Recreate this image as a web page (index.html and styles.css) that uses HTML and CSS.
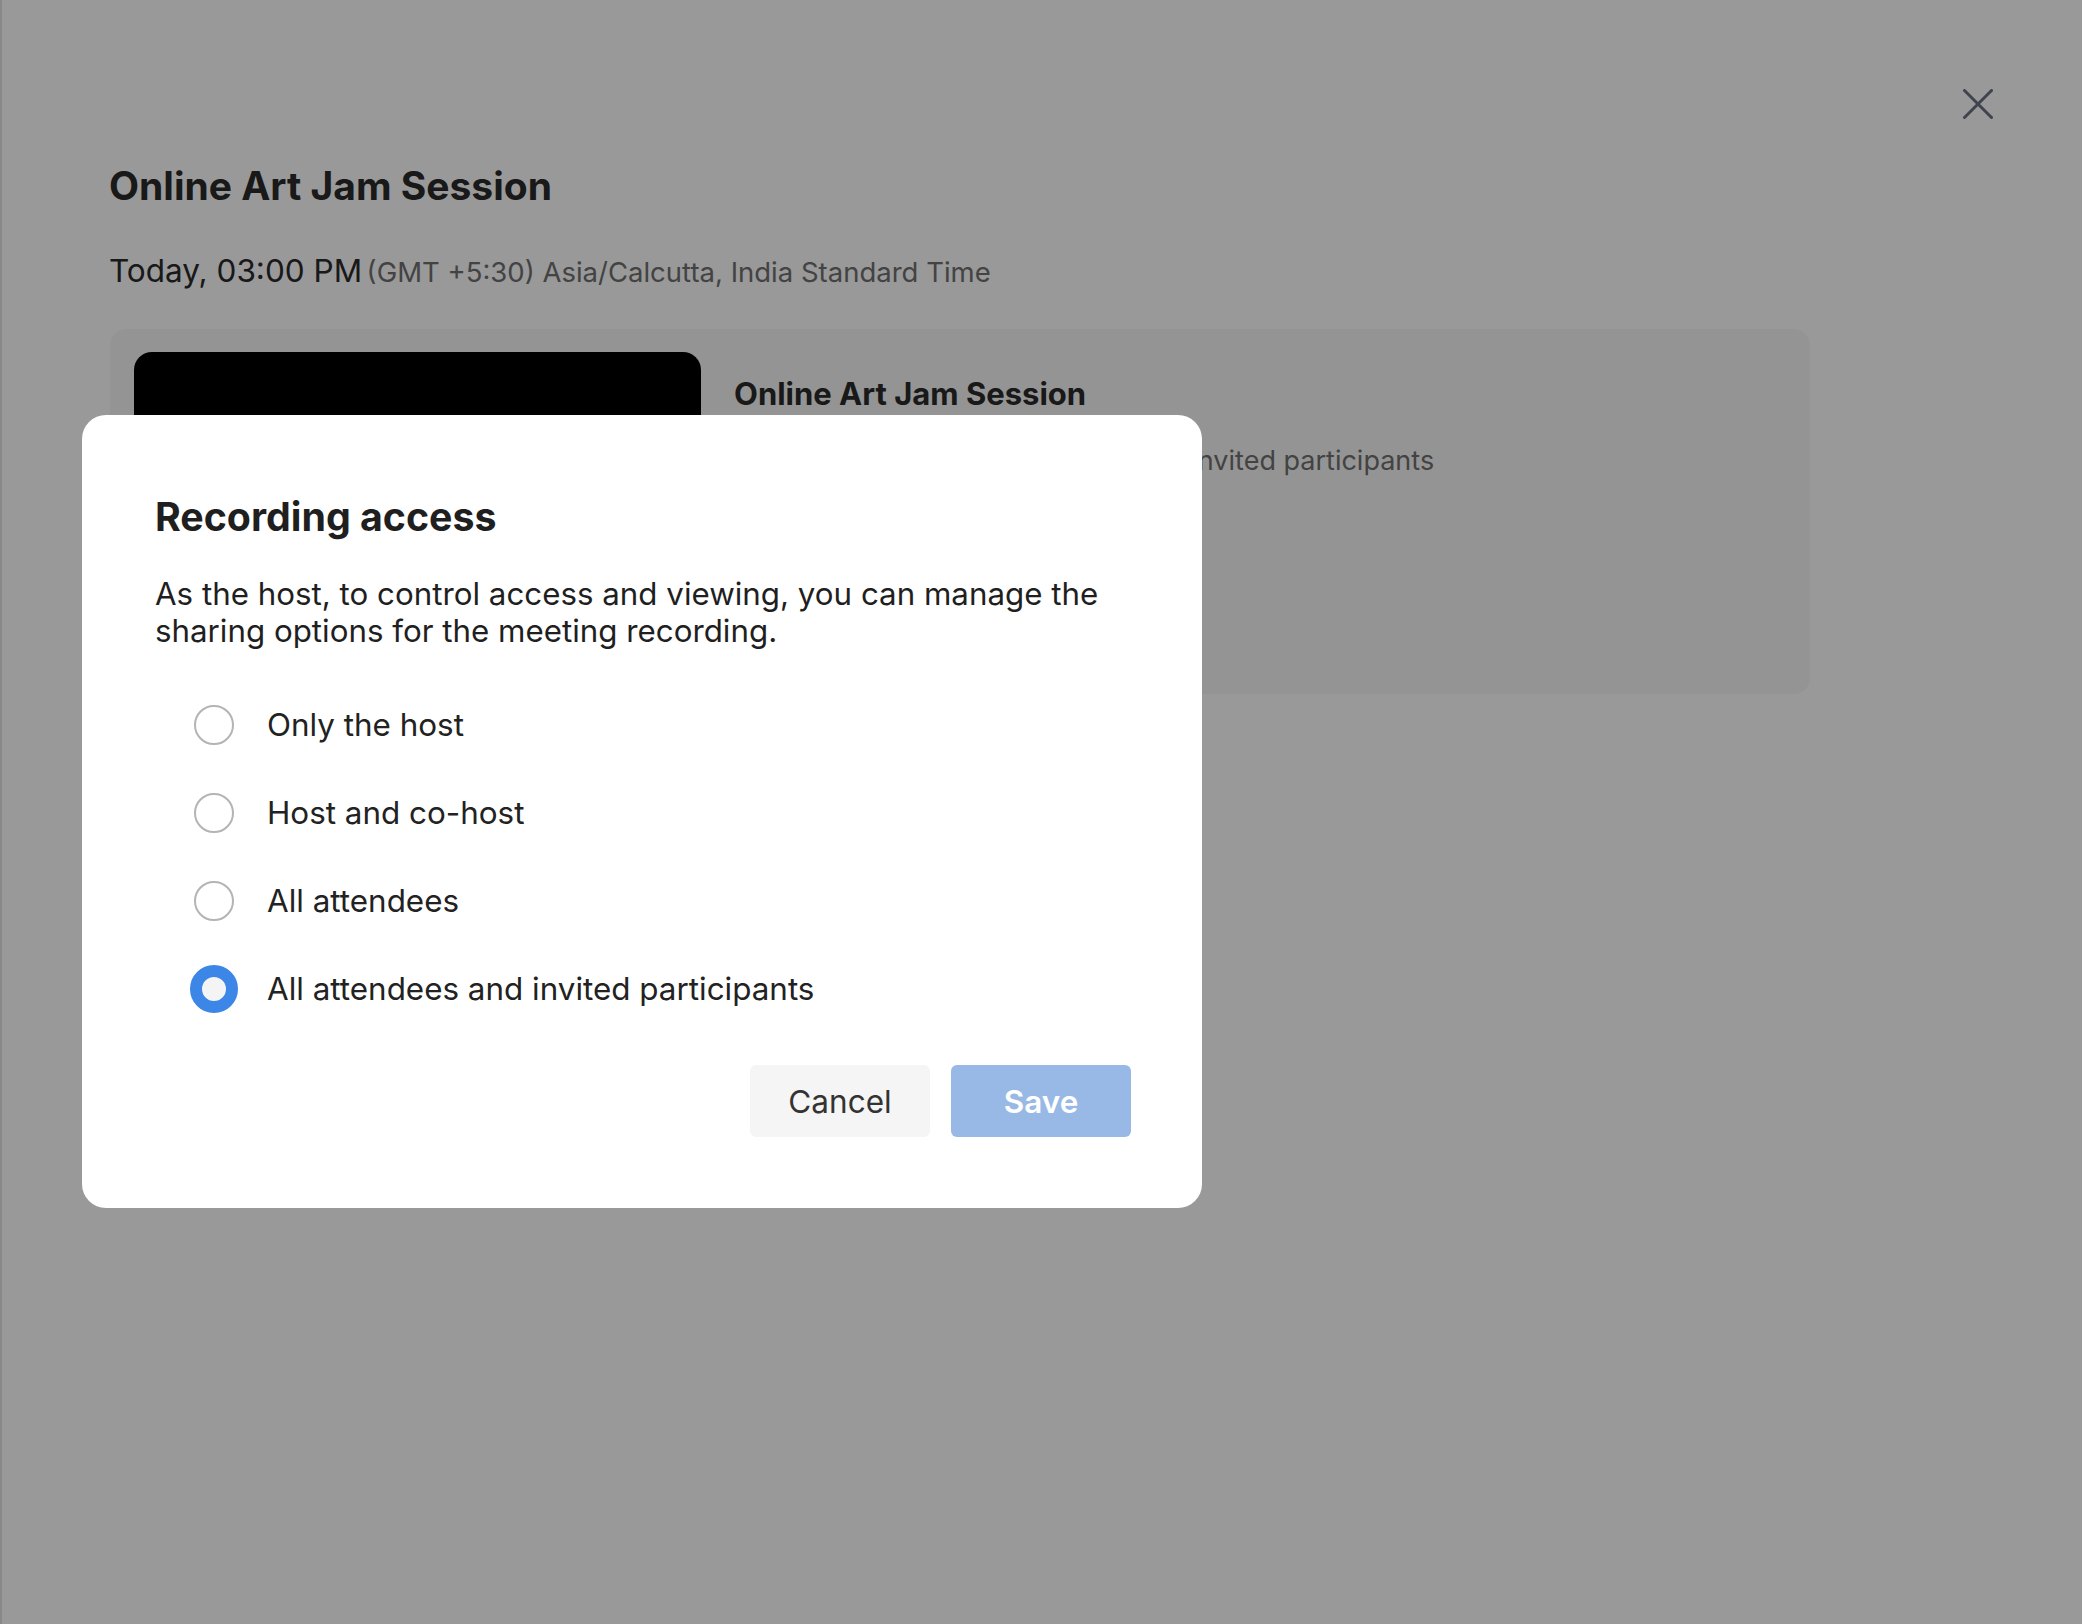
FILE: index.html
```html
<!DOCTYPE html>
<html lang="en">
<head>
<meta charset="utf-8">
<title>Online Art Jam Session</title>
<link rel="stylesheet" href="styles.css">
</head>
<body>
<div class="page">
  <div class="topbar">
    <button class="close" aria-label="Close">
      <svg viewBox="0 0 30 30" width="30" height="30"><path d="M1.5 1.5 L28.5 28.5 M28.5 1.5 L1.5 28.5" stroke="currentColor" stroke-width="3" stroke-linecap="round" fill="none"/></svg>
    </button>
  </div>
  <h1 class="title">Online Art Jam Session</h1>
  <p class="when"><span class="when-time">Today, 03:00 PM</span> <span class="when-zone">(GMT +5:30) Asia/Calcutta, India Standard Time</span></p>
  <div class="card">
    <div class="thumb"></div>
    <div class="card-info">
      <h2 class="card-title">Online Art Jam Session</h2>
      <p class="card-meta">Playback access: All attendees and invited participants</p>
    </div>
  </div>
</div>

<div class="overlay"></div>

<div class="modal" role="dialog" aria-labelledby="dlg-title">
  <h2 class="modal-title" id="dlg-title">Recording access</h2>
  <p class="modal-desc">As the host, to control access and viewing, you can manage the sharing options for the meeting recording.</p>
  <div class="options">
    <label class="option"><span class="radio"></span><span class="option-label">Only the host</span></label>
    <label class="option"><span class="radio"></span><span class="option-label">Host and co-host</span></label>
    <label class="option"><span class="radio"></span><span class="option-label">All attendees</span></label>
    <label class="option"><span class="radio checked"></span><span class="option-label">All attendees and invited participants</span></label>
  </div>
  <div class="actions">
    <button class="btn btn-cancel">Cancel</button>
    <button class="btn btn-save">Save</button>
  </div>
</div>
</body>
</html>
```
FILE: styles.css
```css
* { box-sizing: border-box; }

html, body {
  margin: 0;
  padding: 0;
  background: #ffffff;
  font-family: Inter, Lato, "Noto Sans", "Liberation Sans", sans-serif;
}

.page {
  min-height: 1624px;
  padding: 89px 89px 0 107px;
  border-left: 2px solid #e4e4e4;
}

.topbar {
  display: flex;
  justify-content: flex-end;
  height: 30px;
}

.close {
  width: 30px;
  height: 30px;
  padding: 0;
  border: 0;
  background: none;
  color: #69707d;
  cursor: pointer;
}
.close svg { display: block; }

.title {
  margin: 44px 0 0;
  font-size: 39px;
  line-height: 1.2;
  font-weight: 700;
  color: #2a2a2a;
}

.when {
  margin: 43px 0 0;
  line-height: 36px;
  color: #2a2a2a;
}
.when-time {
  font-size: 31.5px;
}
.when-zone {
  font-size: 27.5px;
  color: #707070;
}

.card {
  margin-top: 35px;
  margin-left: 1px;
  width: 1700px;
  height: 365px;
  padding: 23px 24px;
  background: #f7f7f7;
  border-radius: 16px;
  display: flex;
  gap: 33px;
}

.thumb {
  width: 567px;
  height: 319px;
  background: #000;
  border-radius: 18px;
  flex: none;
}

.card-info {
  padding-top: 22px;
}
.card-title {
  margin: 0;
  font-size: 31px;
  line-height: 40px;
  font-weight: 700;
  color: #2a2a2a;
}
.card-meta {
  margin: 30px 0 0;
  font-size: 27px;
  line-height: 34px;
  color: #707070;
}

.overlay {
  position: fixed;
  inset: 0;
  background: rgba(0, 0, 0, 0.4);
}

.modal {
  position: absolute;
  left: 82px;
  top: 415px;
  width: 1120px;
  padding: 78px 71px 71px 73px;
  background: #ffffff;
  border-radius: 24px;
}

.modal-title {
  margin: 0;
  font-size: 39.3px;
  line-height: 1.2;
  font-weight: 700;
  color: #1f1f1f;
}

.modal-desc {
  margin: 36px 0 0;
  font-size: 31.3px;
  line-height: 37px;
  color: #1f1f1f;
}

.options {
  margin-top: 51px;
  padding-left: 35px;
  display: flex;
  flex-direction: column;
  gap: 40px;
}

.option {
  display: flex;
  align-items: center;
  gap: 29px;
  height: 48px;
}

.radio {
  width: 48px;
  height: 48px;
  flex: none;
  display: flex;
  align-items: center;
  justify-content: center;
}
.radio::before {
  content: "";
  width: 40px;
  height: 40px;
  border-radius: 50%;
  border: 2px solid #b4b4b4;
  box-sizing: border-box;
}
.radio.checked::before {
  width: 48px;
  height: 48px;
  border: 12.5px solid #3b86e6;
  background: #f4f4f4;
}

.option-label {
  font-size: 31.4px;
  color: #222222;
}

.actions {
  margin-top: 52px;
  display: flex;
  justify-content: flex-end;
  gap: 21px;
}

.btn {
  width: 180px;
  height: 72px;
  border: 0;
  border-radius: 6px;
  font-family: inherit;
  font-size: 31.5px;
  cursor: pointer;
}
.btn-cancel {
  background: #f5f5f5;
  color: #333333;
}
.btn-save {
  background: #98b9e5;
  color: #ffffff;
  font-weight: 600;
}
```
